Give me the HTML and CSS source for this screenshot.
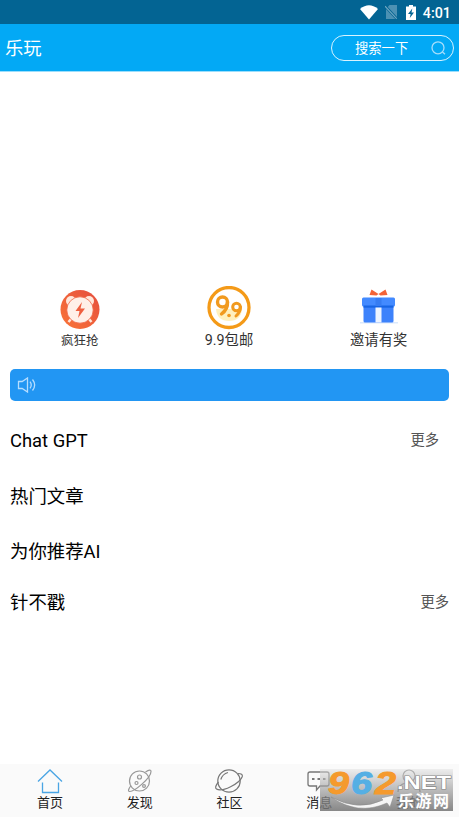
FILE: index.html
```html
<!DOCTYPE html>
<html lang="zh-CN">
<head>
<meta charset="utf-8">
<title>乐玩</title>
<link rel="stylesheet" href="styles.css">
</head>
<body>
<div class="status">
  <svg width="18" height="15" viewBox="0 0 18 15"><path d="M0 4Q9-3.5 18 4L9 14.5Z" fill="#fff"/></svg>
  <svg class="sim" width="12" height="14" viewBox="0 0 12 14"><path d="M4.5 0H12V14H1V4Z" fill="#4c91b3"/><path d="M0 1L12 14" stroke="#036493" stroke-width="2.6"/><path d="M0 1.2L11.7 13.7" stroke="#75a9c2" stroke-width="1.1"/></svg>
  <svg class="battery" width="10" height="15" viewBox="0 0 10 15"><path d="M3 0H7V1.5H10V15H0V1.5H3Z" fill="#fff"/><path d="M6.3 3.5L2 9H4.6L3.8 13L8 7.5H5.5Z" fill="#036493"/></svg>
  <span class="clock">4:01</span>
</div>
<header class="header">
  <h1 class="title">乐玩</h1>
  <div class="search"><span class="hint">搜索一下</span>
    <svg width="16" height="16" viewBox="0 0 16 16" fill="none" stroke="#a6ddfb" stroke-width="1.3"><circle cx="7" cy="7.8" r="6"/><path d="M11.5 12L14 14.3"/></svg>
  </div>
</header>
<main class="main">
  <section class="shortcuts">
    <div class="shortcut">
      <svg class="pic" width="44" height="44" viewBox="0 0 44 44">
        <defs><linearGradient id="red" x1="0" y1="1" x2="1" y2="0"><stop offset="0" stop-color="#f97537"/><stop offset="1" stop-color="#e54d3e"/></linearGradient></defs>
        <circle cx="23" cy="23.5" r="19.5" fill="url(#red)"/>
        <g fill="#ffe6da"><circle cx="14" cy="15" r="5"/><circle cx="32" cy="15" r="5"/><path d="M14 33L11.5 36M32 33L34.5 36" stroke="#ffe6da" stroke-width="2.5"/></g>
        <circle cx="23" cy="24" r="13.2" fill="#fff0e8" stroke="#f06444" stroke-width=".8"/>
        <path d="M25 16L18.5 25H22.5L21 32L28 22.5H23.5Z" fill="#ef6040"/>
      </svg>
      <span class="label small">疯狂抢</span>
    </div>
    <div class="shortcut">
      <svg class="pic" width="44" height="44" viewBox="0 0 44 44" fill="none">
        <circle cx="22" cy="21.5" r="20" stroke="#f49a18" stroke-width="3.3"/>
        <path d="M9 23H35Q34 35 22 35Q10 35 9 23Z" fill="#fff0bd"/>
        <g stroke="#f19a1f" stroke-width="3.4" stroke-linecap="round"><circle cx="15.5" cy="16" r="5"/><path d="M20.5 16Q21 23 14.5 28"/><circle cx="29.5" cy="21" r="3.8" stroke-width="3"/><path d="M33.5 21Q33.5 26 29 30" stroke-width="3"/></g>
        <circle cx="22" cy="29.5" r="1.8" fill="#f19a1f"/>
      </svg>
      <span class="label">9.9包邮</span>
    </div>
    <div class="shortcut">
      <svg class="pic" width="44" height="44" viewBox="0 0 44 44">
        <path d="M21.5 8L14.5 3.5L12.5 9L19.5 9.5ZM21.5 8L28.5 3.5L30.5 9L23.5 9.5Z" fill="#f36336"/>
        <path d="M3 36.8H41" stroke="#dce9fc" stroke-width="1.5"/>
        <rect x="6.5" y="19" width="30" height="17.5" rx="1.5" fill="#3d82fb"/>
        <rect x="5" y="11.5" width="33" height="9" rx="1.5" fill="#438aff"/>
        <rect x="6.5" y="19.5" width="30" height="2.2" fill="#1765e5"/>
        <rect x="18.5" y="21.5" width="6" height="15" fill="#edf4ff"/><rect x="18.5" y="12" width="6" height="8" fill="#367cf2"/>
      </svg>
      <span class="label">邀请有奖</span>
    </div>
  </section>
  <div class="notice">
    <svg width="20" height="16" viewBox="0 0 20 16" fill="none" stroke="#b5ddff" stroke-width="1.3"><path d="M1.5 4.5H5.2L10.5 1V15L5.2 11.5H1.5Z"/><path d="M13 4.7Q15.5 8 13 11.3M15.5 2.5Q19.8 8 15.5 13.5"/></svg>
  </div>
  <section class="row first"><h2>Chat GPT</h2><span class="more">更多</span></section>
  <section class="row second"><h2>热门文章</h2></section>
  <section class="row third"><h2>为你推荐AI</h2></section>
  <section class="row fourth"><h2>针不戳</h2><span class="more">更多</span></section>
</main>
<nav class="tabs">
  <div class="tab"><svg width="28" height="28" viewBox="0 0 28 28" fill="none" stroke="#4aa5e4" stroke-width="1.3"><path d="M2 14.5L14 3L26 14.5M6.5 15.5V25.5H22.5V15.5"/></svg><span>首页</span></div>
  <div class="tab"><svg width="28" height="28" viewBox="0 0 28 28" fill="none" stroke="#989898" stroke-width="1.2"><circle cx="13.5" cy="14" r="10"/><path d="M19.5 5Q25 1.5 25 4.5C25 11 8 25 3.5 24.5Q1 24 5 18.5"/><circle cx="13.5" cy="10" r="2"/><circle cx="10.5" cy="16" r="1.5"/><circle cx="18" cy="19" r="1.4"/></svg><span>发现</span></div>
  <div class="tab"><svg width="30" height="28" viewBox="0 0 30 28" fill="none" stroke="#777" stroke-width="1.2"><circle cx="15" cy="14" r="11.2"/><path d="M24 6.5Q29 6.5 28.3 9.5C26 16.5 8 25.5 2.5 22Q0 20.5 4.5 15M6.8 12.5Q8.5 7 14 5.5"/></svg><span>社区</span></div>
  <div class="tab"><svg width="28" height="28" viewBox="0 0 28 28" fill="none" stroke="#777" stroke-width="1.3"><path d="M5 5H22Q24 5 24 7V17Q24 19 22 19H15L11.5 23V19H5Q3 19 3 17V7Q3 5 5 5Z"/><path d="M7 12H9.5M12.5 12H15M18 12H20.5" stroke-width="2.2"/></svg><span>消息</span></div>
  <div class="tab"><svg width="28" height="28" viewBox="0 0 28 28" fill="none" stroke="#888" stroke-width="1.2"><circle cx="14" cy="9" r="6"/><path d="M3 25Q3 16 14 16Q25 16 25 25"/></svg><span>我的</span></div>
</nav>
<div class="mark">
  <svg width="133" height="42" viewBox="0 0 133 42">
    <path d="M11 28Q38 43 63 31L61 29L74 26L70 38L67 34Q38 47 11 28Z" fill="#f5f5f5" stroke="#888" stroke-width=".5"/>
    <g class="digits"><text class="orange" x="8" y="25" textLength="21" lengthAdjust="spacingAndGlyphs">9</text><text class="blue" x="31" y="25" textLength="21" lengthAdjust="spacingAndGlyphs">6</text><text class="orange" x="55" y="25" textLength="21" lengthAdjust="spacingAndGlyphs">2</text></g>
    <text class="net" x="77" y="20" textLength="54" lengthAdjust="spacingAndGlyphs">.NET</text>
    <text class="site" x="78" y="38" textLength="51" lengthAdjust="spacing">乐游网</text>
  </svg>
</div>
</body>
</html>
```
FILE: styles.css
```css
* { box-sizing: border-box; }
body {
  margin: 0;
  width: 459px;
  height: 817px;
  display: flex;
  flex-direction: column;
  overflow: hidden;
  background: #fff;
  color: #111;
  font-family: Roboto, "Noto Sans CJK SC", sans-serif;
}
h1, h2 { margin: 0; font-weight: 400; }
svg { display: block; flex: none; }
.status {
  height: 24px;
  background: #036493;
  display: flex;
  align-items: center;
  justify-content: flex-end;
  padding-right: 8px;
  color: #fff;
}
.sim { margin-left: 7px; }
.battery { margin-left: 9px; }
.clock { margin: 2px 0 0 7px; font-size: 14.3px; font-weight: 500; line-height: 20px; }
.header {
  height: 48px;
  background: #03a9f5;
  border-bottom: 1px solid #9bdefc;
  display: flex;
  align-items: center;
  justify-content: space-between;
  padding: 1px 5px 0;
  color: #fff;
}
.title { font-size: 18.3px; line-height: 26px; padding-top: 1px; font-weight: 400; }
.search {
  width: 123px;
  height: 26px;
  border: 1px solid #d8f3ff;
  border-radius: 13px;
  display: flex;
  align-items: center;
  justify-content: space-between;
  padding: 0 6px 0 23px;
}
.hint { font-size: 13.3px; line-height: 20px; padding-top: 1px; font-weight: 400; }
.main { flex: 1; }
.shortcuts { display: flex; padding: 214px 5px 0; height: 297px; }
.shortcut { flex: 1; display: flex; flex-direction: column; align-items: center; padding-right: 1px; }
.label { font-size: 14.3px; line-height: 20px; color: #333; }
.small { font-size: 12.5px; line-height: 22px; padding-left: 1px; }
.notice {
  margin: 0 10px;
  height: 32px;
  border-radius: 5px;
  background: #2296f3;
  display: flex;
  align-items: center;
  padding-left: 7px;
}
.row {
  display: flex;
  align-items: center;
  justify-content: space-between;
  padding: 0 10px;
}
.row h2 { font-size: 18.4px; line-height: 28px; color: #000; }
.more { font-size: 14.3px; line-height: 20px; color: #555; }
.first { padding-right: 20px; margin-top: 26px; }
.first .more { margin-top: -2px; }
.second { margin-top: 28px; }
.third { margin-top: 27px; }
.fourth { margin-top: 23px; }
.fourth .more { margin-top: -2px; }
.tabs { height: 53px; background: #fafafa; display: flex; padding: 3px 5px 0; }
.tab {
  flex: 1;
  display: flex;
  flex-direction: column;
  align-items: center;
  font-size: 13px;
  line-height: 18px;
  color: #222;
}
.tab svg { margin-bottom: -1px; }
.mark {
  position: absolute;
  left: 320px;
  top: 769px;
  width: 133px;
  height: 42px;
  background: linear-gradient(rgba(225, 225, 225, .5), rgba(115, 115, 115, .85));
}
.digits { font: italic 700 32px "Liberation Sans", sans-serif; stroke-width: 1px; }
.orange { fill: #f59a2d; stroke: #f59a2d; }
.blue { fill: #55afe4; stroke: #55afe4; }
.net { font: 700 19px "Liberation Sans", sans-serif; fill: #fff; stroke: #888; stroke-width: 1.2px; paint-order: stroke; }
.site { font: 700 16px "Noto Sans CJK SC", sans-serif; fill: #fff; }
```
